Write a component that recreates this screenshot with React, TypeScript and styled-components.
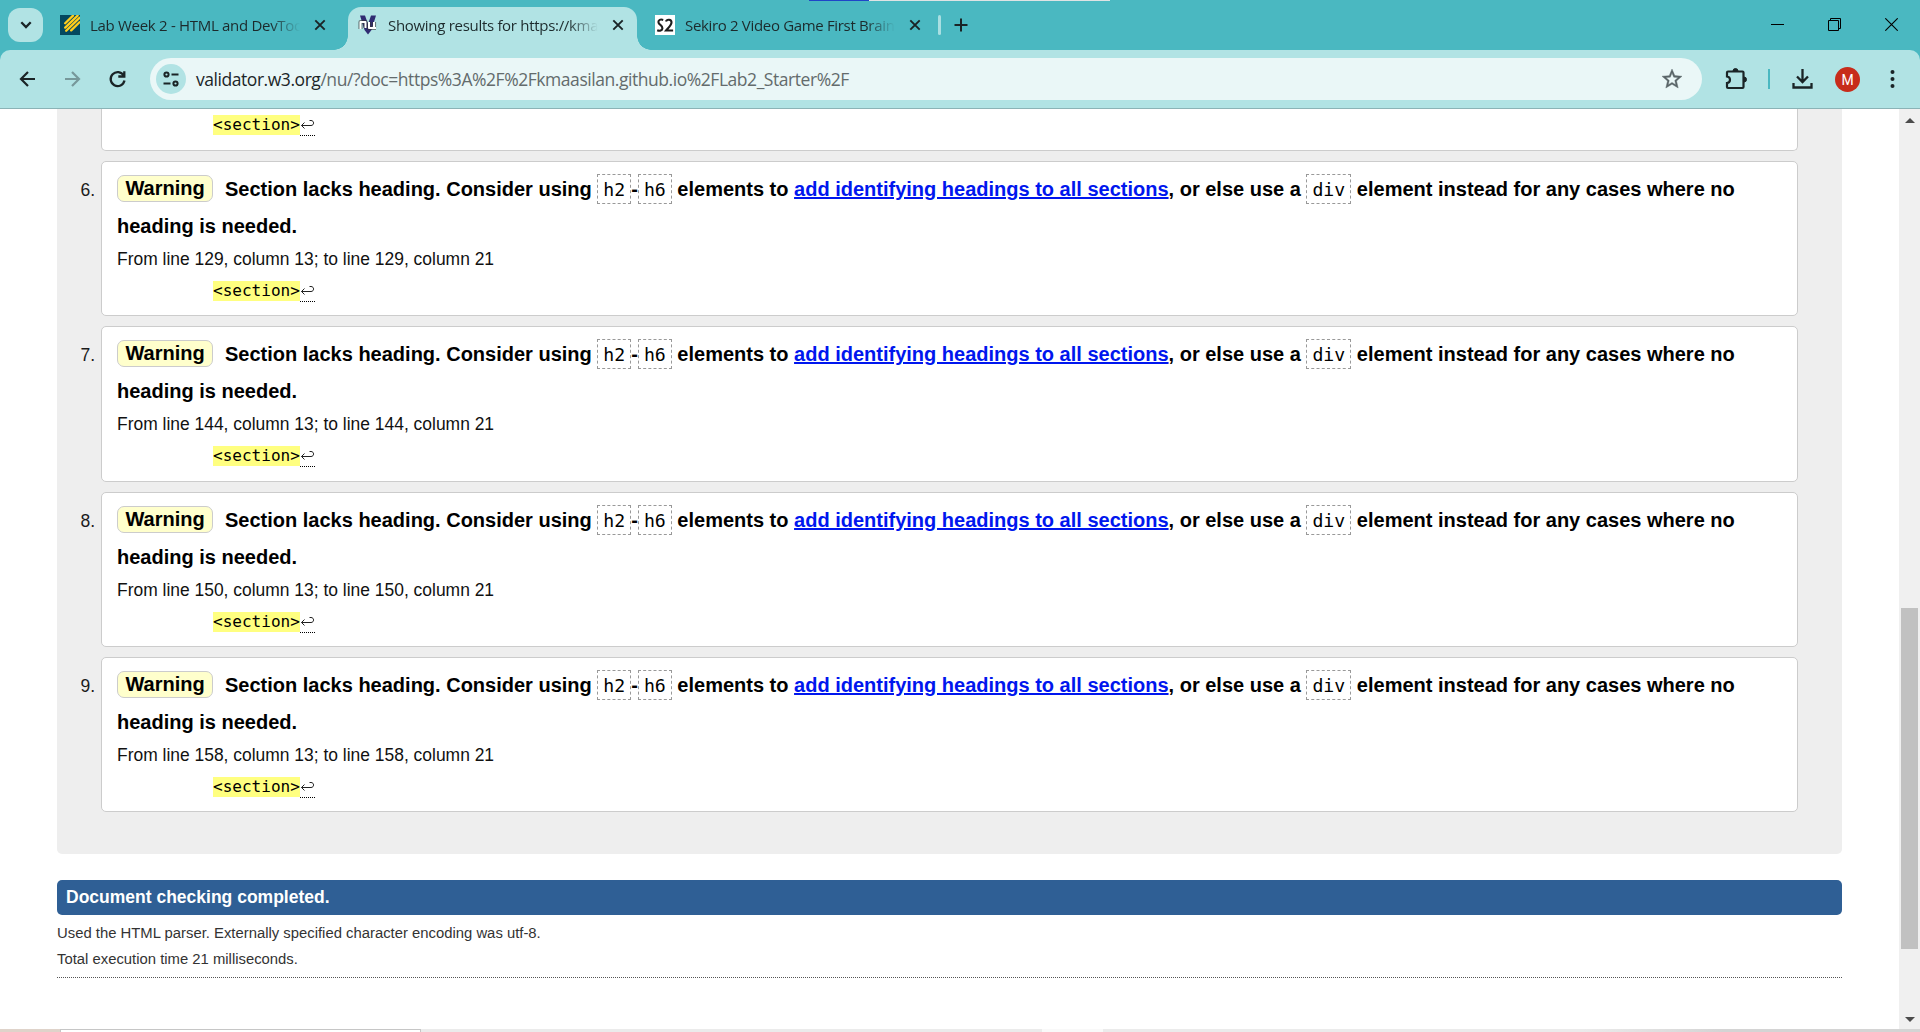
import React from "react";
import styled, { createGlobalStyle } from "styled-components";

const GlobalStyle = createGlobalStyle`
  * { box-sizing: border-box; }
  html, body { margin: 0; padding: 0; background: #fff; overflow: hidden; }
`;

const Window = styled.div`
  width: 1920px;
  height: 1032px;
  display: flex;
  flex-direction: column;
  overflow: hidden;
  background: #fff;
  position: relative;
  font-family: "Liberation Sans", Arial, sans-serif;
`;

const TopSliver = styled.div`
  position: absolute;
  top: 0;
  left: 809px;
  width: 301px;
  height: 1px;
  background: linear-gradient(to right, #1f45c8 60px, #dfe3e4 60px);
`;

const TabStrip = styled.div`
  height: 50px;
  flex: none;
  display: flex;
  align-items: flex-start;
  background: #4ab8c1;
  padding-left: 8px;
`;

const TabSearch = styled.div`
  width: 35px;
  height: 34px;
  margin-top: 8px;
  border-radius: 12px;
  background: #b1e3e4;
  display: flex;
  align-items: center;
  justify-content: center;
`;

const Tab = styled.div<{ $active?: boolean; $width: number; $pad: number }>`
  position: relative;
  width: ${(p) => p.$width}px;
  height: ${(p) => (p.$active ? 43 : 36)}px;
  margin-top: 7px;
  padding: 0 0 ${(p) => (p.$active ? 7 : 0)}px ${(p) => p.$pad}px;
  display: flex;
  align-items: center;
  border-radius: 13px 13px 0 0;
  background: ${(p) => (p.$active ? "#b1e3e4" : "transparent")};
  ${(p) =>
    p.$active &&
    `
    &::before, &::after {
      content: "";
      position: absolute;
      bottom: 0;
      width: 14px;
      height: 14px;
    }
    &::before { left: -14px; background: radial-gradient(circle at 0 0, transparent 13.5px, #b1e3e4 14px); }
    &::after { right: -14px; background: radial-gradient(circle at 100% 0, transparent 13.5px, #b1e3e4 14px); }
  `}
`;

const TabTitle = styled.div<{ $spacing: number }>`
  width: 210px;
  margin-left: 10px;
  overflow: hidden;
  white-space: nowrap;
  font: 15px/20px "Open Sans", "Noto Sans", sans-serif;
  letter-spacing: ${(p) => p.$spacing}px;
  color: #1c2a2c;
  mask-image: linear-gradient(to right, #000 calc(100% - 30px), transparent);
`;

const CloseButton = styled.span`
  margin-left: 14px;
  display: flex;
`;

const TabDivider = styled.div`
  width: 3px;
  height: 20px;
  margin-top: 15px;
  border-radius: 2px;
  background: #a9dfe2;
`;

const NewTab = styled.div`
  margin: 18px 0 0 13px;
  display: flex;
`;

const WindowControls = styled.div`
  margin: 18px 22px 0 auto;
  display: flex;
  gap: 44px;
`;

const ToolbarBack = styled.div`
  height: 59px;
  flex: none;
  background: #4ab8c1;
`;

const Toolbar = styled.div`
  height: 59px;
  display: flex;
  align-items: center;
  background: #b1e3e4;
  border-bottom: 1px solid #8bb3b6;
  border-radius: 10px 10px 0 0;
  padding-left: 16px;
`;

const NavIcons = styled.div`
  display: flex;
  gap: 21px;
  width: 134px;
`;

const AddressBar = styled.div`
  width: 1552px;
  height: 42px;
  border-radius: 21px;
  background: #eaf7f7;
  display: flex;
  align-items: center;
  padding: 0 18px 0 6px;
`;

const SiteInfo = styled.div`
  width: 30px;
  height: 30px;
  border-radius: 50%;
  background: #b1e3e4;
  display: flex;
  align-items: center;
  justify-content: center;
`;

const Url = styled.div`
  flex: 1;
  margin-left: 10px;
  font: 17.5px/24px "Open Sans", "Noto Sans", sans-serif;
  letter-spacing: -0.45px;
  color: #636b6c;
  white-space: nowrap;
`;

const Host = styled.span`
  color: #1c2628;
`;

const Actions = styled.div`
  flex: 1;
  display: flex;
  align-items: center;
  padding-left: 22px;
`;

const ActionDivider = styled.div`
  width: 2px;
  height: 20px;
  margin-left: 20px;
  background: #4ab8c1;
`;

const Download = styled.div`
  display: flex;
  margin-left: 21px;
`;

const Avatar = styled.div`
  width: 25px;
  height: 25px;
  margin-left: 20px;
  border-radius: 50%;
  background: #c72c1a;
  color: #fff;
  font: 14px/26px Roboto, sans-serif;
  text-align: center;
`;

const Kebab = styled.div`
  display: flex;
  margin-left: 30px;
`;

const Viewport = styled.div`
  flex: 1;
  min-height: 0;
  display: flex;
`;

const Page = styled.main`
  flex: 1;
  min-width: 0;
  padding: 0 57px;
`;

const Results = styled.section`
  height: 745px;
  border-radius: 0 0 5px 5px;
  background: #eee;
`;

const MessageList = styled.ol`
  list-style: none;
  margin: 0;
  padding: 0 44px 0 0;
  display: flex;
  flex-direction: column;
  gap: 10px;
`;

const MessageRow = styled.li`
  display: flex;
  height: 155.33px;
`;

const MessageNumber = styled.span`
  width: 44px;
  padding: 18px 6px 0 0;
  text-align: right;
  font-size: 17.5px;
  line-height: 22px;
  color: #1b1b1b;
`;

const MessageCard = styled.div`
  flex: 1;
  border: 1px solid #ccc;
  border-radius: 5px;
  background: #fff;
  padding: 9px 15px 0;
`;

const ScrolledCard = styled.li`
  height: 42px;
  margin-left: 44px;
  padding: 6px 15px 0;
  display: flex;
  border: 1px solid #ccc;
  border-top: 0;
  border-radius: 0 0 5px 5px;
  background: #fff;
`;

const Heading = styled.p`
  margin: 0;
  font-size: 20px;
  line-height: 37px;
  font-weight: bold;
  color: #000;
  white-space: nowrap;
`;

const Badge = styled.strong`
  display: inline-block;
  position: relative;
  top: -1px;
  height: 27px;
  width: 96px;
  margin-right: 12px;
  border: 1px solid #ccc;
  border-radius: 7px;
  background: #ffffcc;
  line-height: 25px;
  text-align: center;
`;

const Code = styled.code`
  display: inline-block;
  height: 30px;
  padding: 0 5px;
  border: 1px dashed #999;
  font: 18.2px/29px "DejaVu Sans Mono", monospace;
  vertical-align: baseline;
`;

const Link = styled.a`
  color: #0016ee;
  text-decoration: underline;
`;

const Location = styled.p`
  margin: 3px 0 0;
  font-size: 17.45px;
  line-height: 22px;
  color: #111;
`;

const Extract = styled.p<{ $top: number }>`
  margin: ${(p) => p.$top}px 0 0 96px;
  display: flex;
  font: 16.05px/20px "DejaVu Sans Mono", monospace;
  color: #000;
`;

const Highlight = styled.code`
  width: 87px;
  height: 20px;
  background: #ffff80;
  font: inherit;
`;

const LineEnd = styled.span`
  width: 15px;
  height: 21px;
  border-bottom: 1px dotted #000;
  display: flex;
  align-items: center;
`;

const Completed = styled.p`
  height: 35px;
  margin: 26px 0 0;
  padding-left: 9px;
  border-radius: 5px;
  background: #2f5f95;
  color: #fff;
  font-weight: bold;
  font-size: 17.5px;
  line-height: 34px;
`;

const Details = styled.div`
  padding-top: 5px;
  height: 63px;
  border-bottom: 1px dotted #555;
  color: #333;
  font-size: 14.85px;
  line-height: 26px;
`;

const Scrollbar = styled.div`
  width: 21px;
  background: #f0f0f0;
  display: flex;
  flex-direction: column;
  align-items: center;
`;

const Arrow = styled.div<{ $down?: boolean }>`
  width: 0;
  height: 0;
  margin: ${(p) => (p.$down ? "auto 0 7px" : "9px 0 0")};
  border: 5px solid transparent;
  border-${(p) => (p.$down ? "bottom" : "top")}-width: 0;
  border-${(p) => (p.$down ? "top" : "bottom")}-color: #4c4c4c;
`;

const Thumb = styled.div`
  width: 17px;
  height: 341px;
  margin-top: 485px;
  background: #c1c1c1;
`;

const BottomEdge = styled.div`
  height: 3px;
  flex: none;
  display: flex;
`;

const EdgePart = styled.div<{ $width?: number; $fill: string; $line?: boolean }>`
  ${(p) => (p.$width ? `width: ${p.$width}px;` : "flex: 1;")}
  background: ${(p) => p.$fill};
  ${(p) => p.$line && "border: 1px solid #c6c6c6; border-bottom: 0;"}
`;

const CloseIcon = () => (
  <svg width="12" height="12" viewBox="0 0 12 12" stroke="#1a2426" strokeWidth="1.9" fill="none">
    <path d="M1.3 1.3l9.4 9.4M10.7 1.3l-9.4 9.4" />
  </svg>
);

const LabIcon = () => (
  <svg width="20" height="20" viewBox="0 0 20 20">
    <rect width="20" height="20" fill="#03485f" />
    <g stroke="#ffcd1c" strokeWidth="2.3" strokeLinecap="round">
      <path d="M5.2 8.2L13 .6M5.2 12.6L17.600.6M6.200 15.800L19.500 2.800M11.200 15.400L19.500 7.200" />
    </g>
  </svg>
);

const NuIcon = () => (
  <svg width="20" height="20" viewBox="0 0 20 20">
    <path d="M2 .5h5L10 9l3-8.500h5L13.500 15 10 19.500 6.500 15z" fill="#302c72" />
    <g fill="none" strokeLinejoin="round">
      <path d="M2.500 14V7h5v6M11 7v6h5V7M16 13h2" stroke="#333" strokeWidth="4.200" opacity=".6" />
      <path d="M2.500 14V7h5v6M11 7v6h5V7M16 13h2" stroke="#fff" strokeWidth="2" />
    </g>
  </svg>
);

const S2Icon = () => (
  <svg width="20" height="20" viewBox="0 0 20 20">
    <rect width="20" height="20" fill="#fff" />
    <g fill="none" stroke="#1d1d1d" strokeWidth="2.1">
      <path d="M8.2 4.9C5.3 4 3.4 5 3.4 7c0 3 4.2 3 4 6.3-.2 2.300-2.700 3-5.200 2" />
      <path d="M11 6.600c.7-2.700 5.500-2.600 5.500.7 0 3-3 5.200-5.400 8.200h7" />
    </g>
  </svg>
);

const messages = [
  { number: 6, line: 129 },
  { number: 7, line: 144 },
  { number: 8, line: 150 },
  { number: 9, line: 158 },
];

const SourceExtract = ({ top }: { top: number }) => (
  <Extract $top={top}>
    <Highlight>&lt;section&gt;</Highlight>
    <LineEnd>
      <svg width="15" height="12" viewBox="0 0 15 12" fill="none" stroke="#222" strokeWidth="1">
        <path d="M4.500 3.500L1.500 6.500l3 3M1.500 6.500H11c3.400 0 3.400-5 0-5H9.500" />
      </svg>
    </LineEnd>
  </Extract>
);

const Message = ({ number, line }: { number: number; line: number }) => (
  <MessageRow>
    <MessageNumber>{number}.</MessageNumber>
    <MessageCard>
      <Heading>
        <Badge>Warning</Badge>
        Section lacks heading. Consider using <Code>h2</Code>-<Code>h6</Code> elements to{" "}
        <Link>add identifying headings to all sections</Link>, or else use a <Code>div</Code> element instead for
        any cases where no
        <br />
        heading is needed.
      </Heading>
      <Location>
        From line {line}, column 13; to line {line}, column 21
      </Location>
      <SourceExtract top={11} />
    </MessageCard>
  </MessageRow>
);

export default function App() {
  return (
    <Window>
      <GlobalStyle />
      <TabStrip>
        <TabSearch>
          <svg width="12" height="8" viewBox="0 0 12 8" fill="none" stroke="#1a2426" strokeWidth="2.3">
            <path d="M1.300 1.300L6 6l4.700-4.700" />
          </svg>
        </TabSearch>
        <Tab $width={305} $pad={17}>
          <LabIcon />
          <TabTitle $spacing={-0.3}>Lab Week 2 - HTML and DevTools</TabTitle>
          <CloseButton><CloseIcon /></CloseButton>
        </Tab>
        <Tab $active $width={289} $pad={10}>
          <NuIcon />
          <TabTitle $spacing={-0.3}>Showing results for https://kmaasilan</TabTitle>
          <CloseButton><CloseIcon /></CloseButton>
        </Tab>
        <Tab $width={301} $pad={18}>
          <S2Icon />
          <TabTitle $spacing={-0.33}>Sekiro 2 Video Game First Brainstorm</TabTitle>
          <CloseButton><CloseIcon /></CloseButton>
        </Tab>
        <TabDivider />
        <NewTab>
          <svg width="14" height="14" viewBox="0 0 14 14" stroke="#1a2426" strokeWidth="2">
            <path d="M7 .5v13M.5 7h13" />
          </svg>
        </NewTab>
        <WindowControls>
          <svg width="13" height="13" viewBox="0 0 13 13" stroke="#000"><path d="M0 6.500h13" /></svg>
          <svg width="13" height="13" viewBox="0 0 13 13" stroke="#000" fill="none">
            <path d="M.5 2.500h10v10H.500zM2.500 2.500v-2h10v10h-2" />
          </svg>
          <svg width="13" height="13" viewBox="0 0 13 13" stroke="#000" strokeWidth="1.1">
            <path d="M.3.300l12.400 12.400M12.700.300L.3 12.700" />
          </svg>
        </WindowControls>
      </TabStrip>
      <ToolbarBack>
        <Toolbar>
          <NavIcons>
            <svg width="24" height="24" viewBox="0 0 24 24" fill="none" stroke="#1a2426" strokeWidth="2.200">
              <path d="M19 12H5.500M12 5l-7 7 7 7" />
            </svg>
            <svg width="24" height="24" viewBox="0 0 24 24" fill="none" stroke="#77989a" strokeWidth="2.200">
              <path d="M4 12h13.500M11 5l7 7-7 7" />
            </svg>
            <svg width="24" height="24" viewBox="0 0 24 24" fill="none" stroke="#1a2426" strokeWidth="2.300">
              <path d="M17.700 8.500A7 7 0 1 0 18.500 13.600M18.300 4.200v5.300h-6" />
            </svg>
          </NavIcons>
          <AddressBar>
            <SiteInfo>
              <svg width="18" height="16" viewBox="0 0 18 16" fill="none" stroke="#1a2426" strokeWidth="2">
                <circle cx="4.500" cy="3.500" r="2.100" />
                <path d="M9.500 3.500h7M1.500 12.500h7" />
                <circle cx="13.500" cy="12.500" r="2.100" />
              </svg>
            </SiteInfo>
            <Url>
              <Host>validator.w3.org</Host>/nu/?doc=https%3A%2F%2Fkmaasilan.github.io%2FLab2_Starter%2F
            </Url>
            <svg width="24" height="24" viewBox="0 0 24 24" fill="#596467" stroke="#596467" strokeWidth=".4">
              <path d="M22 9.240l-7.190-.620L12 2 9.190 8.630 2 9.240l5.460 4.730L5.820 21 12 17.270 18.180 21l-1.630-7.030L22 9.240zM12 15.400l-3.760 2.270 1-4.280-3.320-2.880 4.380-.380L12 6.100l1.710 4.040 4.380.380-3.320 2.880 1 4.280L12 15.400z" />
            </svg>
          </AddressBar>
          <Actions>
            <svg width="24" height="24" viewBox="0 0 24 24">
              <path
                d="M4 4.500h14.500a1 1 0 0 1 1 1V20a1 1 0 0 1-1 1H4a1 1 0 0 1-1-1v-4c4-.5 4-6 0-6.500v-4a1 1 0 0 1 1-1z"
                fill="none"
                stroke="#1a2426"
                strokeWidth="2.200"
              />
              <path d="M9 4a2.500 2.500 0 0 1 5 0zM20 10a2.500 2.500 0 0 1 0 5z" fill="#1a2426" stroke="#1a2426" />
            </svg>
            <ActionDivider />
            <Download>
              <svg width="24" height="24" viewBox="0 0 24 24" fill="none" stroke="#1a2426" strokeWidth="2.300">
                <path d="M11.500 2v13M6 9.500l5.500 5.500L17 9.500M2.500 16v4.500h18V16" />
              </svg>
            </Download>
            <Avatar>M</Avatar>
            <Kebab>
              <svg width="5" height="20" viewBox="0 0 5 20" fill="#1a2426">
                <circle cx="2.500" cy="3" r="2" /><circle cx="2.500" cy="10" r="2" /><circle cx="2.500" cy="17" r="2" />
              </svg>
            </Kebab>
          </Actions>
        </Toolbar>
      </ToolbarBack>
      <Viewport>
        <Page>
          <Results>
            <MessageList>
              <ScrolledCard>
                <SourceExtract top={0} />
              </ScrolledCard>
              {messages.map((m) => <Message key={m.number} {...m} />)}
            </MessageList>
          </Results>
          <Completed>Document checking completed.</Completed>
          <Details>
            Used the HTML parser. Externally specified character encoding was utf-8.
            <br />
            Total execution time 21 milliseconds.
          </Details>
        </Page>
        <Scrollbar>
          <Arrow />
          <Thumb />
          <Arrow $down />
        </Scrollbar>
      </Viewport>
      <BottomEdge>
        <EdgePart $width={60} $fill="#dfd3ca" />
        <EdgePart $width={361} $fill="#fff" $line />
        <EdgePart $width={621} $fill="#ebebeb" />
        <EdgePart $width={61} $fill="#f9f9f9" />
        <EdgePart $fill="linear-gradient(to right, #ebebeb 480px, #d4d4d4 620px)" />
      </BottomEdge>
      <TopSliver />
    </Window>
  );
}
